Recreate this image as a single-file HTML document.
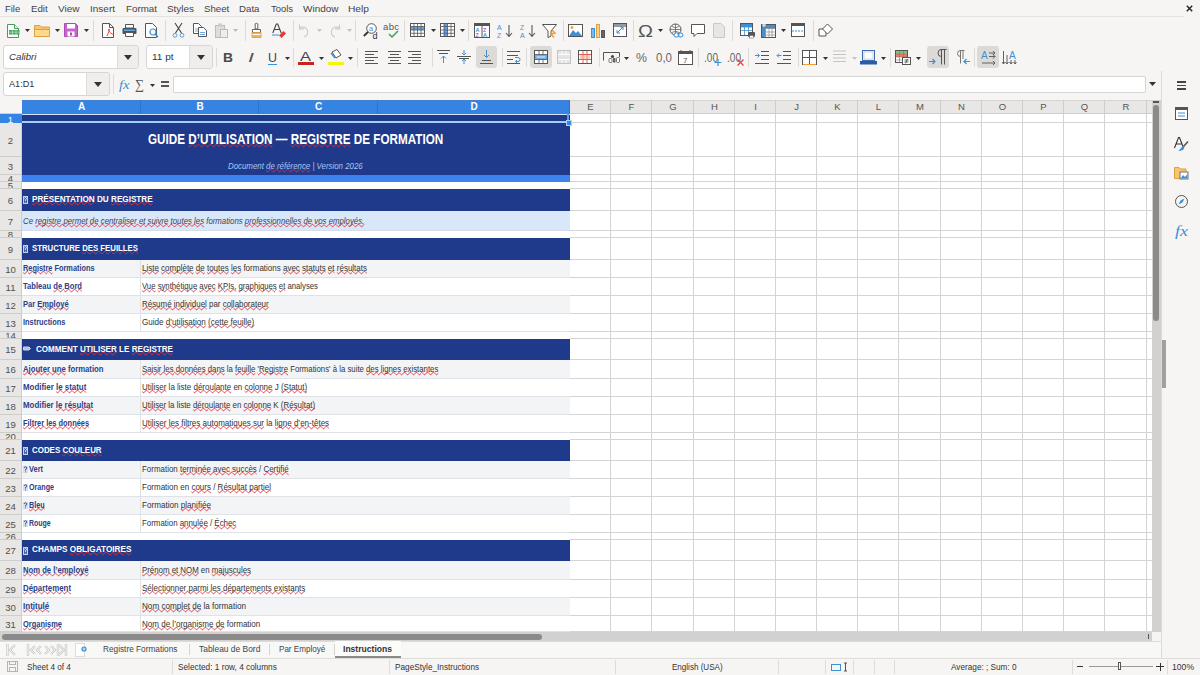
<!DOCTYPE html><html><head><meta charset="utf-8"><style>
*{box-sizing:border-box}
html,body{margin:0;padding:0}
body{width:1200px;height:675px;overflow:hidden;background:#f6f5f4;position:relative;font-family:"Liberation Sans",sans-serif;color:#3a3a3a}
.a{position:absolute}
.t{position:absolute;white-space:nowrap;line-height:1;transform-origin:0 0}
.w{text-decoration:underline wavy #d9303a;text-decoration-thickness:0.5px;text-underline-offset:-0.5px;text-decoration-skip-ink:none}
svg{position:absolute;overflow:visible}
#q0{transform:scaleX(0.9622)}
#q1{transform:scaleX(0.9887)}
#q2{transform:scaleX(1.0255)}
#q3{transform:scaleX(1.0198)}
#q4{transform:scaleX(0.9990)}
#q5{transform:scaleX(1.0117)}
#q6{transform:scaleX(0.9860)}
#q7{transform:scaleX(0.9902)}
#q8{transform:scaleX(0.9617)}
#q9{transform:scaleX(1.0184)}
#q10{transform:scaleX(1.0419)}
#q11{transform:scaleX(1.1794)}
#q12{transform:scaleX(1.0109)}
#q13{transform:scaleX(1.0465)}
#q14{transform:scaleX(1.0649)}
#q15{transform:scaleX(1.6552)}
#q16{transform:scaleX(1.0378)}
#q17{transform:scaleX(1.2685)}
#q18{transform:scaleX(0.9514)}
#q19{transform:scaleX(0.8850)}
#q20{transform:scaleX(0.7744)}
#q21{transform:scaleX(0.7744)}
#q22{transform:scaleX(0.9486)}
#q23{transform:scaleX(1.1181)}
#q24{transform:scaleX(0.9014)}
#q25{transform:scaleX(1.2006)}
#q26{transform:scaleX(0.8608)}
#q27{transform:scaleX(0.8780)}
#q28{transform:scaleX(0.8412)}
#q29{transform:scaleX(0.8924)}
#q30{transform:scaleX(0.9022)}
#q31{transform:scaleX(0.9190)}
#q32{transform:scaleX(0.9135)}
#q33{transform:scaleX(0.8951)}
#q34{transform:scaleX(0.9127)}
#q35{transform:scaleX(0.9596)}
#q36{transform:scaleX(0.8353)}
#q37{transform:scaleX(0.8280)}
#q38{transform:scaleX(0.9062)}
#q39{transform:scaleX(0.8652)}
#q40{transform:scaleX(0.8981)}
#q41{transform:scaleX(0.8808)}
#q42{transform:scaleX(0.9104)}
#q43{transform:scaleX(0.8222)}
#q44{transform:scaleX(0.7750)}
#q45{transform:scaleX(0.8417)}
#q46{transform:scaleX(0.8002)}
#q47{transform:scaleX(0.8139)}
#q48{transform:scaleX(0.7920)}
#q49{transform:scaleX(0.8353)}
#q50{transform:scaleX(0.7779)}
#q51{transform:scaleX(0.8506)}
#q52{transform:scaleX(0.8112)}
#q53{transform:scaleX(0.8191)}
#q54{transform:scaleX(0.8326)}
#q55{transform:scaleX(0.8403)}
#q56{transform:scaleX(0.8297)}
#q57{transform:scaleX(0.8318)}
#q58{transform:scaleX(0.7824)}
#q59{transform:scaleX(0.8436)}
#q60{transform:scaleX(0.7791)}
#q61{transform:scaleX(0.8363)}
#q62{transform:scaleX(0.7515)}
#q63{transform:scaleX(0.8423)}
#q64{transform:scaleX(0.7624)}
#q65{transform:scaleX(0.8540)}
#q66{transform:scaleX(0.7340)}
#q67{transform:scaleX(0.8305)}
#q68{transform:scaleX(0.8068)}
#q69{transform:scaleX(0.8256)}
#q70{transform:scaleX(0.8265)}
#q71{transform:scaleX(0.8380)}
#q72{transform:scaleX(0.8446)}
#q73{transform:scaleX(0.8563)}
#q74{transform:scaleX(0.7856)}
#q75{transform:scaleX(0.8454)}
</style></head><body>

<div class="t" id="q0" style="left:5.30px;top:4.20px;font-size:9.80px;font-weight:normal;color:#444;">File</div>
<div class="t" id="q1" style="left:31.10px;top:4.20px;font-size:9.80px;font-weight:normal;color:#444;">Edit</div>
<div class="t" id="q2" style="left:58.20px;top:4.20px;font-size:9.80px;font-weight:normal;color:#444;">View</div>
<div class="t" id="q3" style="left:90.20px;top:4.20px;font-size:9.80px;font-weight:normal;color:#444;">Insert</div>
<div class="t" id="q4" style="left:125.50px;top:4.20px;font-size:9.80px;font-weight:normal;color:#444;">Format</div>
<div class="t" id="q5" style="left:166.50px;top:4.20px;font-size:9.80px;font-weight:normal;color:#444;">Styles</div>
<div class="t" id="q6" style="left:204.00px;top:4.20px;font-size:9.80px;font-weight:normal;color:#444;">Sheet</div>
<div class="t" id="q7" style="left:239.00px;top:4.20px;font-size:9.80px;font-weight:normal;color:#444;">Data</div>
<div class="t" id="q8" style="left:270.50px;top:4.20px;font-size:9.80px;font-weight:normal;color:#444;">Tools</div>
<div class="t" id="q9" style="left:302.50px;top:4.20px;font-size:9.80px;font-weight:normal;color:#444;">Window</div>
<div class="t" id="q10" style="left:347.50px;top:4.20px;font-size:9.80px;font-weight:normal;color:#444;">Help</div>
<div class="a" style="left:0;top:16px;width:1184px;height:1px;background:#e4e2df"></div>
<svg style="left:1186px;top:4.5px" width="7" height="7" viewBox="0 0 7 7"><path d="M.8 .8L6.2 6.2M6.2 .8L.8 6.2" stroke="#2a2a2a" stroke-width="1.5"/></svg>
<svg style="left:7px;top:24px" width="12" height="14" viewBox="0 0 12 14"><path d="M.5 .5H7.5L11.5 4.5V13.5H.5Z" fill="#fff" stroke="#4f9a62" stroke-width="1"/><path d="M7.5 .5V4.5H11.5" fill="#d8f0dc" stroke="#4f9a62"/><rect x="2" y="6" width="10.5" height="4.5" fill="#47a862"/><path d="M2 8.2H12.5M5.5 6V10.5M9 6V10.5" stroke="#c8ecd0" stroke-width=".6"/></svg>
<svg style="left:25px;top:29px" width="5" height="3" viewBox="0 0 5 3"><path d="M0 0H5L2.5 3Z" fill="#333"/></svg>
<svg style="left:34px;top:24px" width="16" height="13" viewBox="0 0 16 13"><path d="M.5 1.5H6L7.5 3H15.5V12.5H.5Z" fill="#f5c56f" stroke="#e0a040"/><path d="M.5 5.5H15.5V12.5H.5Z" fill="#fbd88b" stroke="#e0a040"/></svg>
<svg style="left:55px;top:29px" width="5" height="3" viewBox="0 0 5 3"><path d="M0 0H5L2.5 3Z" fill="#333"/></svg>
<svg style="left:64px;top:23px" width="14" height="14" viewBox="0 0 14 14"><path d="M.5 .5H11.5L13.5 2.5V13.5H.5Z" fill="#c765cf" stroke="#a94db3"/><rect x="3" y="1" width="8" height="4.5" fill="#fff"/><rect x="3.5" y="8.5" width="7" height="5" fill="#fff"/><rect x="6" y="9.5" width="2" height="3" fill="#a94db3"/></svg>
<svg style="left:84px;top:29px" width="5" height="3" viewBox="0 0 5 3"><path d="M0 0H5L2.5 3Z" fill="#333"/></svg>
<div class="a" style="left:93px;top:20px;width:1px;height:21px;background:#dddbd8"></div>
<svg style="left:102px;top:23px" width="13" height="15" viewBox="0 0 13 15"><path d="M.5 .5H7.5L11.5 4.5V14.5H.5Z" fill="#fff" stroke="#555"/><path d="M7.5 .5V4.5H11.5" fill="none" stroke="#555"/><path d="M5 13C7 9 8 6 7 6S6 9 12 12" stroke="#e0453a" stroke-width="1" fill="none"/></svg>
<svg style="left:122px;top:24px" width="15" height="13" viewBox="0 0 15 13"><path d="M3.5 .5H11.5V4H3.5Z" fill="#fff" stroke="#555"/><rect x=".5" y="4" width="14" height="6" rx="1" fill="#4d5358"/><rect x="2" y="5.5" width="11" height="1.5" fill="#5ba5e0"/><path d="M3.5 8.5H11.5V12.5H3.5Z" fill="#fff" stroke="#555"/></svg>
<svg style="left:145px;top:23px" width="14" height="15" viewBox="0 0 14 15"><path d="M.5 .5H7.5L11.5 4.5V14.5H.5Z" fill="#fff" stroke="#555"/><circle cx="8" cy="9" r="3" fill="none" stroke="#3d8fd6" stroke-width="1.2"/><path d="M10 11L13 14" stroke="#3d8fd6" stroke-width="1.4"/></svg>
<div class="a" style="left:165px;top:20px;width:1px;height:21px;background:#dddbd8"></div>
<svg style="left:172px;top:23px" width="13" height="15" viewBox="0 0 13 15"><path d="M3 0L9.5 10M10 0L3.5 10" stroke="#444" stroke-width="1.1"/><circle cx="3" cy="12.3" r="1.9" fill="none" stroke="#5aa0e0" stroke-width="1"/><circle cx="10" cy="12.3" r="1.9" fill="none" stroke="#5aa0e0" stroke-width="1"/></svg>
<svg style="left:193px;top:23px" width="14" height="14" viewBox="0 0 14 14"><path d="M.5 .5H5.5L8.5 3.5V10.5H.5Z" fill="#fff" stroke="#555"/><path d="M2 6H6M2 8H6" stroke="#5aa0e0" stroke-width=".8"/><path d="M5.5 4.5H10.5L13.5 7.5V13.5H5.5Z" fill="#fff" stroke="#555"/><path d="M7 9.5H12M7 11.5H12" stroke="#5aa0e0" stroke-width=".9"/></svg>
<svg style="left:215px;top:23px" width="13" height="15" viewBox="0 0 13 15"><rect x=".5" y="2.5" width="9" height="12" fill="#ddd" stroke="#bbb"/><rect x="3" y=".5" width="4" height="3" fill="#ccc"/><rect x="5.5" y="6.5" width="7" height="8" fill="#eee" stroke="#bbb"/></svg>
<svg style="left:233px;top:29px" width="5" height="3" viewBox="0 0 5 3"><path d="M0 0H5L2.5 3Z" fill="#bbb"/></svg>
<div class="a" style="left:245px;top:20px;width:1px;height:21px;background:#dddbd8"></div>
<svg style="left:251px;top:23px" width="11" height="15" viewBox="0 0 11 15"><path d="M4.2 .8Q5.5 -.2 6.8 .8V6H4.2Z" fill="#fff" stroke="#555" stroke-width=".9"/><path d="M1.5 6.5H9.5V9.5H1.5Z" fill="#fff" stroke="#555" stroke-width=".9"/><path d="M1 9.5H10V14.5H1Z" fill="#f2b25a" stroke="#d99a4a" stroke-width=".8"/><path d="M1.5 11.5H9.5" stroke="#fff" stroke-width="1"/></svg>
<svg style="left:272px;top:23px" width="14" height="15" viewBox="0 0 14 15"><path d="M.8 10L4.3 1H5.7L9.2 10M2.3 6.5H7.7" stroke="#444" stroke-width="1.1" fill="none"/><path d="M0 12H7" stroke="#3d8fd6" stroke-width="1"/><path d="M7 12.5L11.5 8L14 10.5L9.5 15Z" fill="#e03a3a"/></svg>
<div class="a" style="left:293px;top:20px;width:1px;height:21px;background:#dddbd8"></div>
<svg style="left:298px;top:24px" width="13" height="14" viewBox="0 0 13 14"><path d="M2 4A5 5 0 1 1 6 13" stroke="#c8c8c8" stroke-width="1.1" fill="none"/><path d="M1.5 .5V5H6" stroke="#c8c8c8" stroke-width="1.1" fill="none"/></svg>
<svg style="left:317px;top:29px" width="5" height="3" viewBox="0 0 5 3"><path d="M0 0H5L2.5 3Z" fill="#c4c4c4"/></svg>
<svg style="left:328px;top:24px" width="13" height="14" viewBox="0 0 13 14"><path d="M11 4A5 5 0 1 0 7 13" stroke="#c8c8c8" stroke-width="1.1" fill="none"/><path d="M11.5 .5V5H7" stroke="#c8c8c8" stroke-width="1.1" fill="none"/></svg>
<svg style="left:347px;top:29px" width="5" height="3" viewBox="0 0 5 3"><path d="M0 0H5L2.5 3Z" fill="#c4c4c4"/></svg>
<div class="a" style="left:355px;top:20px;width:1px;height:21px;background:#dddbd8"></div>
<svg style="left:363px;top:23px" width="15" height="15" viewBox="0 0 15 15"><circle cx="8.5" cy="5.5" r="4.8" fill="#fff" stroke="#555" stroke-width="1"/><path d="M5 9L.8 13" stroke="#333" stroke-width="1.8"/><text x="6" y="8" font-size="7.5" fill="#3d8fd6" font-family="Liberation Sans">a</text><text x="9.5" y="15.5" font-size="9" fill="#333" font-family="Liberation Sans">d</text></svg>
<svg style="left:383px;top:22px" width="17" height="16" viewBox="0 0 17 16"><text x="0" y="8" font-size="9.5" fill="#555" font-family="Liberation Sans" textLength="16">abc</text><path d="M6 12L9 15L15 9" stroke="#3aa35a" stroke-width="1.5" fill="none"/></svg>
<div class="a" style="left:404px;top:20px;width:1px;height:21px;background:#dddbd8"></div>
<svg style="left:410px;top:23px" width="15" height="14" viewBox="0 0 15 14"><rect x=".5" y=".5" width="14" height="13" fill="#fff" stroke="#555"/><rect x="1" y="3.5" width="13" height="3.5" fill="#5ea4e6"/><path d="M1 3.5H14M1 7H14M1 10.3H14M4 1V13M7.5 1V13M11 1V13" stroke="#555" stroke-width=".8"/></svg>
<svg style="left:431px;top:29px" width="5" height="3" viewBox="0 0 5 3"><path d="M0 0H5L2.5 3Z" fill="#333"/></svg>
<svg style="left:440px;top:23px" width="15" height="14" viewBox="0 0 15 14"><rect x=".5" y=".5" width="14" height="13" fill="#fff" stroke="#555"/><rect x="4" y="1" width="3.5" height="12" fill="#5ea4e6"/><path d="M1 3.5H14M1 7H14M1 10.3H14M4 1V13M7.5 1V13M11 1V13" stroke="#555" stroke-width=".8"/></svg>
<svg style="left:460px;top:29px" width="5" height="3" viewBox="0 0 5 3"><path d="M0 0H5L2.5 3Z" fill="#333"/></svg>
<div class="a" style="left:468px;top:20px;width:1px;height:21px;background:#dddbd8"></div>
<svg style="left:474px;top:23px" width="16" height="15" viewBox="0 0 16 15"><rect x=".5" y=".5" width="15" height="14" fill="#fff" stroke="#555"/><rect x="1" y="1" width="14" height="2" fill="#555"/><path d="M8 3V14" stroke="#555"/><text x="1.5" y="8.5" font-size="5.5" fill="#3d8fd6" font-family="Liberation Sans" font-weight="bold">A</text><text x="1.5" y="13.5" font-size="5.5" fill="#c05ad0" font-family="Liberation Sans" font-weight="bold">Z</text><text x="9" y="8.5" font-size="5.5" fill="#c05ad0" font-family="Liberation Sans" font-weight="bold">Z</text><text x="9" y="13.5" font-size="5.5" fill="#3d8fd6" font-family="Liberation Sans" font-weight="bold">A</text></svg>
<svg style="left:497px;top:23px" width="16" height="15" viewBox="0 0 16 15"><text x="0" y="6.5" font-size="7" fill="#3d8fd6" font-family="Liberation Sans">A</text><text x="0" y="14.5" font-size="7" fill="#c05ad0" font-family="Liberation Sans">Z</text><path d="M12 2V13M9 10L12 13.5L15 10" stroke="#555" stroke-width="1.1" fill="none"/></svg>
<svg style="left:520px;top:23px" width="16" height="15" viewBox="0 0 16 15"><text x="0" y="6.5" font-size="7" fill="#c05ad0" font-family="Liberation Sans">Z</text><text x="0" y="14.5" font-size="7" fill="#3d8fd6" font-family="Liberation Sans">A</text><path d="M12 2V13M9 10L12 13.5L15 10" stroke="#555" stroke-width="1.1" fill="none"/></svg>
<svg style="left:542px;top:23px" width="15" height="15" viewBox="0 0 15 15"><path d="M.5 1.5H14.5L9 8V13L6 14.5V8Z" fill="#fff" stroke="#555"/><path d="M10 7L13 10L9 11L12 14.5" stroke="#f0a030" stroke-width="1.6" fill="none"/></svg>
<div class="a" style="left:563px;top:20px;width:1px;height:21px;background:#dddbd8"></div>
<svg style="left:568px;top:24px" width="15" height="13" viewBox="0 0 15 13"><rect x=".5" y=".5" width="14" height="12" fill="#fff" stroke="#555"/><path d="M1 12L5 6L8 9L10 7L14 12Z" fill="#3d8fd6"/><circle cx="4" cy="3.5" r="1.4" fill="#f0a030"/></svg>
<svg style="left:591px;top:24px" width="14" height="14" viewBox="0 0 14 14"><rect x=".5" y="4.5" width="3" height="9" fill="#7db8ec" stroke="#3d8fd6"/><rect x="5.5" y=".5" width="3" height="13" fill="#f7d38a" stroke="#e0a040"/><rect x="10.5" y="6.5" width="3" height="7" fill="#666" stroke="#555"/></svg>
<svg style="left:613px;top:23px" width="14" height="14" viewBox="0 0 14 14"><rect x=".5" y=".5" width="13" height="13" fill="#fff" stroke="#555"/><rect x="1" y="1" width="12" height="3" fill="#999"/><path d="M4 10L10 4M7 4H10V7M4 7V10H7" stroke="#3d8fd6" fill="none"/></svg>
<div class="a" style="left:633px;top:20px;width:1px;height:21px;background:#dddbd8"></div>
<div class="t" id="q11" style="left:638.00px;top:22.61px;font-size:17.00px;font-weight:normal;color:#555;">&#937;</div>
<svg style="left:658px;top:29px" width="5" height="3" viewBox="0 0 5 3"><path d="M0 0H5L2.5 3Z" fill="#333"/></svg>
<svg style="left:669px;top:23px" width="15" height="15" viewBox="0 0 15 15"><circle cx="6.5" cy="6.5" r="5.5" fill="none" stroke="#555"/><path d="M1 6.5H12M6.5 1V12M3 3.5Q6.5 6 10 3.5M3 9.5Q6.5 7 10 9.5" stroke="#555" stroke-width=".7" fill="none"/><rect x="5" y="10" width="5" height="4" rx="2" fill="#fff" stroke="#3d8fd6"/><rect x="9" y="10" width="5" height="4" rx="2" fill="none" stroke="#3d8fd6"/></svg>
<svg style="left:691px;top:24px" width="14" height="13" viewBox="0 0 14 13"><path d="M.5 .5H13.5V9.5H6L3 12.5V9.5H.5Z" fill="#fff" stroke="#555"/></svg>
<svg style="left:713px;top:23px" width="12" height="15" viewBox="0 0 12 15"><path d="M.5 .5H8L11.5 4V14.5H.5Z" fill="#e6e6e6" stroke="#c8c8c8"/></svg>
<div class="a" style="left:732px;top:20px;width:1px;height:21px;background:#dddbd8"></div>
<svg style="left:740px;top:23px" width="16" height="16" viewBox="0 0 16 16"><rect x=".5" y=".5" width="12" height="12" fill="#fff" stroke="#555"/><path d="M1 4H12M1 7.5H12M4.5 1V12M8.5 1V12" stroke="#3d8fd6" stroke-width=".8"/><rect x="1" y="1" width="11" height="3" fill="#3d8fd6"/><rect x="8" y="9" width="7" height="5" rx="1" fill="#555"/><rect x="9.5" y="12.5" width="4" height="2.5" fill="#fff" stroke="#555" stroke-width=".5"/></svg>
<svg style="left:761px;top:23px" width="15" height="15" viewBox="0 0 15 15"><rect x=".5" y="1.5" width="14" height="13" fill="#fff" stroke="#555"/><rect x="1" y="2" width="13" height="3.5" fill="#3d8fd6"/><rect x="1" y="2" width="3.5" height="12" fill="#3d8fd6"/><path d="M1 5.5H14M1 9H14M1 12H14M4.5 2V14M8 2V14M11 2V14" stroke="#888" stroke-width=".7"/><path d="M3 0V4M1 2H5" stroke="#fff" stroke-width="1"/></svg>
<svg style="left:781px;top:29px" width="5" height="3" viewBox="0 0 5 3"><path d="M0 0H5L2.5 3Z" fill="#333"/></svg>
<svg style="left:791px;top:23px" width="14" height="14" viewBox="0 0 14 14"><rect x=".5" y=".5" width="13" height="13" fill="#fff" stroke="#555"/><rect x="1" y="1" width="12" height="2" fill="#555"/><path d="M1 8H13" stroke="#3d8fd6" stroke-dasharray="2 1"/></svg>
<div class="a" style="left:813px;top:20px;width:1px;height:21px;background:#dddbd8"></div>
<svg style="left:818px;top:23px" width="15" height="14" viewBox="0 0 15 14"><path d="M1 6H8V13H1Z" fill="#fff" stroke="#555"/><path d="M9.5 1L14.5 6L9.5 11L4.5 6Z" fill="#fff" stroke="#555"/></svg>
<div class="a" style="left:3px;top:45px;width:136px;height:24px;border:1px solid #d8d6d3;border-radius:3px;background:#fff"></div>
<div class="a" style="left:117px;top:46px;width:21px;height:22px;background:#efeeec;border-left:1px solid #dedcd9;border-radius:0 2px 2px 0"></div>
<svg style="left:124px;top:55px" width="8" height="5" viewBox="0 0 8 5"><path d="M0 0H8L4 5Z" fill="#333"/></svg>
<div class="t" id="q12" style="left:9.30px;top:51.57px;font-size:9.60px;font-weight:normal;font-style:italic;color:#333;">Calibri</div>
<div class="a" style="left:146px;top:45px;width:67px;height:24px;border:1px solid #d8d6d3;border-radius:3px;background:#fff"></div>
<div class="a" style="left:189px;top:46px;width:23px;height:22px;background:#efeeec;border-left:1px solid #dedcd9;border-radius:0 2px 2px 0"></div>
<svg style="left:197px;top:55px" width="8" height="5" viewBox="0 0 8 5"><path d="M0 0H8L4 5Z" fill="#333"/></svg>
<div class="t" id="q13" style="left:151.70px;top:51.57px;font-size:9.60px;font-weight:normal;color:#333;">11 pt</div>
<div class="a" style="left:216px;top:48px;width:1px;height:19px;background:#dddbd8"></div>
<div class="t" id="q14" style="left:223.00px;top:50.99px;font-size:13.00px;font-weight:bold;color:#4a4a4a;">B</div>
<div class="t" id="q15" style="left:248.00px;top:50.99px;font-size:13.00px;font-weight:normal;font-style:italic;color:#555;">I</div>
<div class="t" id="q16" style="left:268.00px;top:51.84px;font-size:12.00px;font-weight:normal;color:#444;">U</div>
<div class="a" style="left:268px;top:64px;width:9px;height:1px;background:#3d8fd6"></div>
<svg style="left:285px;top:57px" width="5" height="3" viewBox="0 0 5 3"><path d="M0 0H5L2.5 3Z" fill="#333"/></svg>
<div class="a" style="left:293px;top:48px;width:1px;height:19px;background:#dddbd8"></div>
<div class="t" id="q17" style="left:300.00px;top:49.99px;font-size:13.00px;font-weight:normal;color:#444;">A</div>
<div class="a" style="left:298px;top:62px;width:16px;height:3px;background:#c9211e"></div>
<svg style="left:319px;top:57px" width="5" height="3" viewBox="0 0 5 3"><path d="M0 0H5L2.5 3Z" fill="#333"/></svg>
<svg style="left:329px;top:49px" width="15" height="15" viewBox="0 0 15 15"><path d="M3 3L8 .5L12 6L7 9Z" fill="#fff" stroke="#555"/><path d="M2 4L6 9" stroke="#3d8fd6" stroke-width="1.5"/></svg>
<div class="a" style="left:328px;top:62px;width:16px;height:3px;background:#f5f50a"></div>
<svg style="left:348px;top:57px" width="5" height="3" viewBox="0 0 5 3"><path d="M0 0H5L2.5 3Z" fill="#333"/></svg>
<div class="a" style="left:357px;top:48px;width:1px;height:19px;background:#dddbd8"></div>
<svg style="left:365px;top:50px" width="14" height="14" viewBox="0 0 14 14"><path d="M0 1.5H13" stroke="#555" stroke-width="1"/><path d="M0 4.5H9" stroke="#555" stroke-width="1"/><path d="M0 7.5H13" stroke="#555" stroke-width="1"/><path d="M0 10.5H9" stroke="#555" stroke-width="1"/><path d="M0 13.5H13" stroke="#555" stroke-width="1"/></svg>
<svg style="left:388px;top:50px" width="14" height="14" viewBox="0 0 14 14"><path d="M0 1.5H13" stroke="#555" stroke-width="1"/><path d="M2 4.5H11" stroke="#555" stroke-width="1"/><path d="M0 7.5H13" stroke="#555" stroke-width="1"/><path d="M2 10.5H11" stroke="#555" stroke-width="1"/><path d="M0 13.5H13" stroke="#555" stroke-width="1"/></svg>
<svg style="left:408px;top:50px" width="14" height="14" viewBox="0 0 14 14"><path d="M0 1.5H13" stroke="#555" stroke-width="1"/><path d="M4 4.5H13" stroke="#555" stroke-width="1"/><path d="M0 7.5H13" stroke="#555" stroke-width="1"/><path d="M4 10.5H13" stroke="#555" stroke-width="1"/><path d="M0 13.5H13" stroke="#555" stroke-width="1"/></svg>
<div class="a" style="left:432px;top:48px;width:1px;height:19px;background:#dddbd8"></div>
<svg style="left:437px;top:50px" width="13" height="14" viewBox="0 0 13 14"><path d="M0 .5H13M2 3.5H11" stroke="#555"/><path d="M6.5 13V6M4 8.5L6.5 6L9 8.5" stroke="#3d8fd6" fill="none"/></svg>
<svg style="left:457px;top:50px" width="14" height="14" viewBox="0 0 14 14"><path d="M0 6.5H14M2 8.5H12" stroke="#555"/><path d="M7 0V5M5 3L7 5L9 3M7 14V9M5 11L7 9L9 11" stroke="#3d8fd6" fill="none"/></svg>
<div class="a" style="left:476px;top:46px;width:21px;height:22px;background:#dcdad7;border-radius:3px"></div>
<svg style="left:480px;top:50px" width="13" height="14" viewBox="0 0 13 14"><path d="M0 13.5H13M2 10.5H11" stroke="#555"/><path d="M6.5 0V7M4 5L6.5 7.5L9 5" stroke="#3d8fd6" fill="none"/></svg>
<div class="a" style="left:502px;top:48px;width:1px;height:19px;background:#dddbd8"></div>
<svg style="left:507px;top:50px" width="14" height="14" viewBox="0 0 14 14"><path d="M0 1.5H13M0 5.5H11M0 9.5H6M0 13.5H13" stroke="#555"/><path d="M8 7.5H11A2 2 0 0 1 11 11.5H9M10 10L8.5 11.5L10 13" stroke="#3d8fd6" fill="none"/></svg>
<div class="a" style="left:526px;top:48px;width:1px;height:19px;background:#dddbd8"></div>
<div class="a" style="left:530px;top:46px;width:22px;height:22px;background:#dcdad7;border-radius:3px"></div>
<svg style="left:534px;top:50px" width="14" height="14" viewBox="0 0 14 14"><rect x=".5" y=".5" width="13" height="13" fill="#fff" stroke="#555"/><rect x="1" y="4.5" width="12" height="5" fill="#6aaae6"/><path d="M1 4.5H13M1 9.5H13M5 1V4.5M9 1V4.5M5 9.5V13M9 9.5V13" stroke="#555" stroke-width=".8"/><path d="M2.5 7H11.5" stroke="#fff" stroke-width=".9"/></svg>
<svg style="left:557px;top:50px" width="14" height="14" viewBox="0 0 14 14"><rect x=".5" y=".5" width="13" height="13" fill="#e4e4e4" stroke="#c4c4c4"/><path d="M1 4.5H13M1 9.5H13M5 1V4.5M9 1V4.5M5 9.5V13M9 9.5V13" stroke="#fff" stroke-width=".9"/></svg>
<svg style="left:578px;top:50px" width="14" height="14" viewBox="0 0 14 14"><rect x=".5" y=".5" width="13" height="13" fill="#fff" stroke="#555"/><path d="M1 4.5H13M1 9.5H13M5 1V13M9 1V13" stroke="#e05040" stroke-width=".9"/><path d="M3 5V9M7 5V9M11 5V9" stroke="#e05040" stroke-width=".6"/></svg>
<div class="a" style="left:599px;top:48px;width:1px;height:19px;background:#dddbd8"></div>
<svg style="left:603px;top:51px" width="17" height="12" viewBox="0 0 17 12"><path d="M.5 9.5V1.5H16.5V6" fill="none" stroke="#555"/><circle cx="9.5" cy="5.5" r="1.6" fill="#444"/><rect x="6" y="7.5" width="3" height="4" rx="1" fill="#fff" stroke="#555" stroke-width=".8"/><rect x="10" y="7" width="2.5" height="4.5" fill="#666"/><rect x="13.5" y="6.5" width="3" height="5" rx="1" fill="#fff" stroke="#555" stroke-width=".8"/></svg>
<svg style="left:624px;top:57px" width="5" height="3" viewBox="0 0 5 3"><path d="M0 0H5L2.5 3Z" fill="#333"/></svg>
<div class="t" id="q18" style="left:636.00px;top:50.99px;font-size:13.00px;font-weight:normal;color:#666;">%</div>
<div class="t" id="q19" style="left:656.00px;top:50.99px;font-size:13.00px;font-weight:normal;color:#666;">0,0</div>
<svg style="left:678px;top:50px" width="15" height="15" viewBox="0 0 15 15"><rect x=".5" y="1.5" width="14" height="13" fill="#fff" stroke="#555"/><rect x="1" y="2" width="13" height="2" fill="#555"/><path d="M3 0V3M12 0V3" stroke="#555"/><text x="5" y="13" font-size="8" fill="#555" font-family="Liberation Sans">7</text></svg>
<div class="a" style="left:698px;top:48px;width:1px;height:19px;background:#dddbd8"></div>
<div class="t" id="q20" style="left:704.00px;top:50.99px;font-size:13.00px;font-weight:normal;color:#666;">.00</div>
<svg style="left:714px;top:59px" width="8" height="7" viewBox="0 0 8 7"><path d="M4 0V7M.5 3.5H7.5" stroke="#3d8fd6" stroke-width="1.2"/></svg>
<div class="t" id="q21" style="left:727.00px;top:50.99px;font-size:13.00px;font-weight:normal;color:#666;">.00</div>
<svg style="left:737px;top:59px" width="7" height="7" viewBox="0 0 7 7"><path d="M.5 .5L6.5 6.5M6.5 .5L.5 6.5" stroke="#e04040" stroke-width="1.2"/></svg>
<div class="a" style="left:748px;top:48px;width:1px;height:19px;background:#dddbd8"></div>
<svg style="left:755px;top:50px" width="14" height="14" viewBox="0 0 14 14"><path d="M6 1.5H14M6 5.5H14M6 9.5H14M0 13.5H14" stroke="#555"/><path d="M0 5.5H4M2.5 3.5L4.5 5.5L2.5 7.5" stroke="#3d8fd6" fill="none"/></svg>
<svg style="left:777px;top:50px" width="14" height="14" viewBox="0 0 14 14"><path d="M6 1.5H14M6 5.5H14M6 9.5H14M0 13.5H14" stroke="#555"/><path d="M.5 5.5H4.5M2 3.5L0 5.5L2 7.5" stroke="#3d8fd6" fill="none"/></svg>
<div class="a" style="left:798px;top:48px;width:1px;height:19px;background:#dddbd8"></div>
<svg style="left:802px;top:50px" width="15" height="15" viewBox="0 0 15 15"><rect x=".5" y=".5" width="14" height="14" fill="#fff" stroke="#555"/><path d="M7.5 1V14M1 7.5H14" stroke="#555"/><path d="M1 14.5H14" stroke="#f0a030"/></svg>
<svg style="left:823px;top:57px" width="5" height="3" viewBox="0 0 5 3"><path d="M0 0H5L2.5 3Z" fill="#333"/></svg>
<svg style="left:833px;top:50px" width="13" height="14" viewBox="0 0 13 14"><path d="M0 1H13M0 4.5H13M0 8H13M0 11.5H13" stroke="#c4c4c4" stroke-width="1.2"/></svg>
<svg style="left:852px;top:57px" width="5" height="3" viewBox="0 0 5 3"><path d="M0 0H5L2.5 3Z" fill="#c4c4c4"/></svg>
<svg style="left:860px;top:50px" width="17" height="15" viewBox="0 0 17 15"><rect x="2.5" y=".5" width="12" height="10" fill="#f4f8fc" stroke="#3a6cb0"/><rect x="4" y="2" width="9" height="7" fill="#fff" stroke="#9ab" stroke-width=".5"/><rect x="0" y="11" width="17" height="3.5" fill="#2a5aa8"/></svg>
<svg style="left:881px;top:57px" width="5" height="3" viewBox="0 0 5 3"><path d="M0 0H5L2.5 3Z" fill="#333"/></svg>
<div class="a" style="left:890px;top:48px;width:1px;height:19px;background:#dddbd8"></div>
<svg style="left:895px;top:50px" width="16" height="15" viewBox="0 0 16 15"><rect x=".5" y=".5" width="12" height="12" fill="#fff" stroke="#555"/><rect x="1" y="1" width="11" height="3" fill="#7cc67c"/><rect x="1" y="4" width="11" height="3" fill="#f07a6a"/><path d="M1 4H12M1 7H12M1 10H12M4.5 1V12M8.5 1V12" stroke="#777" stroke-width=".6"/><rect x="7.5" y="7.5" width="8" height="7" fill="#fff" stroke="#555"/><path d="M9.5 10H13.5M9.5 12H13.5M12.5 8.8L10.5 13.3" stroke="#444" stroke-width=".8"/></svg>
<svg style="left:916px;top:57px" width="5" height="3" viewBox="0 0 5 3"><path d="M0 0H5L2.5 3Z" fill="#333"/></svg>
<div class="a" style="left:927px;top:46px;width:22px;height:22px;background:#dcdad7;border-radius:3px"></div>
<svg style="left:935px;top:49px" width="12" height="16" viewBox="0 0 12 16"><path d="M5.5 .5H11.5M6.5 .5V15.5M9.5 .5V15.5M6.5 .5A3.5 3.5 0 0 0 6.5 7.5" stroke="#555" fill="none" stroke-width="1"/></svg>
<svg style="left:929px;top:58px" width="8" height="7" viewBox="0 0 8 7"><path d="M0 3.5H6M3.5 1L6 3.5L3.5 6" stroke="#3d8fd6" fill="none" stroke-width="1.2"/></svg>
<svg style="left:955px;top:50px" width="10" height="14" viewBox="0 0 10 14"><path d="M5 .5H9.5M5.5 .5V13.5M8 .5V9M5.5 .5A3 3 0 0 0 5.5 6.5" stroke="#777" fill="none" stroke-width="1"/></svg>
<svg style="left:963px;top:58px" width="8" height="7" viewBox="0 0 8 7"><path d="M7 3.5H1M3.5 1L1 3.5L3.5 6" stroke="#3d8fd6" fill="none" stroke-width="1.2"/></svg>
<div class="a" style="left:974px;top:48px;width:1px;height:19px;background:#dddbd8"></div>
<div class="a" style="left:977px;top:46px;width:22px;height:22px;background:#dcdad7;border-radius:3px"></div>
<svg style="left:981px;top:50px" width="15" height="15" viewBox="0 0 15 15"><text x="0" y="9" font-size="10" fill="#3d8fd6" font-family="Liberation Sans">A</text><path d="M8 3H14M12 1L14 3L12 5M8 6.5H14M12 4.5L14 6.5L12 8.5M1 13H14M12 11L14 13L12 15" stroke="#555" fill="none" stroke-width=".9"/></svg>
<svg style="left:1002px;top:50px" width="16" height="15" viewBox="0 0 16 15"><text x="7" y="9" font-size="10" fill="#3d8fd6" font-family="Liberation Sans">A</text><path d="M1.5 1V14M0 12L1.5 14L3 12M5 5V14M3.5 12L5 14L6.5 12M9 10V14M7.5 12L9 14L10.5 12M13 10V14M11.5 12L13 14L14.5 12" stroke="#555" fill="none" stroke-width=".9"/></svg>
<div class="a" style="left:3px;top:72px;width:107px;height:24px;border:1px solid #d8d6d3;border-radius:3px;background:#fff"></div>
<div class="a" style="left:86px;top:73px;width:23px;height:22px;background:#efeeec;border-left:1px solid #dedcd9;border-radius:0 2px 2px 0"></div>
<svg style="left:94px;top:82px" width="8" height="5" viewBox="0 0 8 5"><path d="M0 0H8L4 5Z" fill="#333"/></svg>
<div class="t" id="q22" style="left:8.70px;top:79.37px;font-size:9.60px;font-weight:normal;color:#333;">A1:D1</div>
<div class="a" style="left:113px;top:74px;width:1px;height:20px;background:#dddbd8"></div>
<div class="t" id="q23" style="left:119.00px;top:78.49px;font-size:13.00px;font-weight:normal;font-style:italic;font-family:'Liberation Serif',serif;color:#3d8fd6;">fx</div>
<div class="t" id="q24" style="left:135.00px;top:77.65px;font-size:14.00px;font-weight:normal;font-family:'Liberation Serif',serif;color:#555;">&#8721;</div>
<svg style="left:150px;top:84px" width="5" height="3" viewBox="0 0 5 3"><path d="M0 0H5L2.5 3Z" fill="#333"/></svg>
<div class="a" style="left:161px;top:81px;width:8px;height:2px;background:#555"></div>
<div class="a" style="left:161px;top:85px;width:8px;height:2px;background:#555"></div>
<div class="a" style="left:173px;top:76px;width:973px;height:17px;border:1px solid #d8d6d3;border-radius:2px;background:#fff"></div>
<svg style="left:1149px;top:82px" width="7" height="4" viewBox="0 0 7 4"><path d="M0 0H7L3.5 4Z" fill="#333"/></svg>
<div class="a" style="left:1161px;top:71px;width:1px;height:587px;background:#dcdad7"></div>
<div class="a" style="left:1177px;top:81px;width:9px;height:1.5px;background:#444"></div>
<div class="a" style="left:1177px;top:84.5px;width:9px;height:1.5px;background:#444"></div>
<div class="a" style="left:1177px;top:88px;width:9px;height:1.5px;background:#444"></div>
<div class="a" style="left:22px;top:114px;width:1130px;height:518px;background:#fff"></div>
<div class="a" style="left:569px;top:114px;width:1px;height:518px;background:#d4d4d4"></div>
<div class="a" style="left:610px;top:114px;width:1px;height:518px;background:#d4d4d4"></div>
<div class="a" style="left:651px;top:114px;width:1px;height:518px;background:#d4d4d4"></div>
<div class="a" style="left:693px;top:114px;width:1px;height:518px;background:#d4d4d4"></div>
<div class="a" style="left:734px;top:114px;width:1px;height:518px;background:#d4d4d4"></div>
<div class="a" style="left:775px;top:114px;width:1px;height:518px;background:#d4d4d4"></div>
<div class="a" style="left:816px;top:114px;width:1px;height:518px;background:#d4d4d4"></div>
<div class="a" style="left:857px;top:114px;width:1px;height:518px;background:#d4d4d4"></div>
<div class="a" style="left:898px;top:114px;width:1px;height:518px;background:#d4d4d4"></div>
<div class="a" style="left:940px;top:114px;width:1px;height:518px;background:#d4d4d4"></div>
<div class="a" style="left:981px;top:114px;width:1px;height:518px;background:#d4d4d4"></div>
<div class="a" style="left:1022px;top:114px;width:1px;height:518px;background:#d4d4d4"></div>
<div class="a" style="left:1063px;top:114px;width:1px;height:518px;background:#d4d4d4"></div>
<div class="a" style="left:1104px;top:114px;width:1px;height:518px;background:#d4d4d4"></div>
<div class="a" style="left:1146px;top:114px;width:1px;height:518px;background:#d4d4d4"></div>
<div class="a" style="left:22px;top:122px;width:1130px;height:1px;background:#d4d4d4"></div>
<div class="a" style="left:22px;top:156px;width:1130px;height:1px;background:#d4d4d4"></div>
<div class="a" style="left:22px;top:174px;width:1130px;height:1px;background:#d4d4d4"></div>
<div class="a" style="left:22px;top:181px;width:1130px;height:1px;background:#d4d4d4"></div>
<div class="a" style="left:22px;top:188px;width:1130px;height:1px;background:#d4d4d4"></div>
<div class="a" style="left:22px;top:210px;width:1130px;height:1px;background:#d4d4d4"></div>
<div class="a" style="left:22px;top:230px;width:1130px;height:1px;background:#d4d4d4"></div>
<div class="a" style="left:22px;top:237px;width:1130px;height:1px;background:#d4d4d4"></div>
<div class="a" style="left:22px;top:259px;width:1130px;height:1px;background:#d4d4d4"></div>
<div class="a" style="left:22px;top:277px;width:1130px;height:1px;background:#d4d4d4"></div>
<div class="a" style="left:22px;top:295px;width:1130px;height:1px;background:#d4d4d4"></div>
<div class="a" style="left:22px;top:313px;width:1130px;height:1px;background:#d4d4d4"></div>
<div class="a" style="left:22px;top:331px;width:1130px;height:1px;background:#d4d4d4"></div>
<div class="a" style="left:22px;top:338px;width:1130px;height:1px;background:#d4d4d4"></div>
<div class="a" style="left:22px;top:359px;width:1130px;height:1px;background:#d4d4d4"></div>
<div class="a" style="left:22px;top:378px;width:1130px;height:1px;background:#d4d4d4"></div>
<div class="a" style="left:22px;top:396px;width:1130px;height:1px;background:#d4d4d4"></div>
<div class="a" style="left:22px;top:414px;width:1130px;height:1px;background:#d4d4d4"></div>
<div class="a" style="left:22px;top:432px;width:1130px;height:1px;background:#d4d4d4"></div>
<div class="a" style="left:22px;top:439px;width:1130px;height:1px;background:#d4d4d4"></div>
<div class="a" style="left:22px;top:460px;width:1130px;height:1px;background:#d4d4d4"></div>
<div class="a" style="left:22px;top:478px;width:1130px;height:1px;background:#d4d4d4"></div>
<div class="a" style="left:22px;top:496px;width:1130px;height:1px;background:#d4d4d4"></div>
<div class="a" style="left:22px;top:514px;width:1130px;height:1px;background:#d4d4d4"></div>
<div class="a" style="left:22px;top:532px;width:1130px;height:1px;background:#d4d4d4"></div>
<div class="a" style="left:22px;top:539px;width:1130px;height:1px;background:#d4d4d4"></div>
<div class="a" style="left:22px;top:560px;width:1130px;height:1px;background:#d4d4d4"></div>
<div class="a" style="left:22px;top:579px;width:1130px;height:1px;background:#d4d4d4"></div>
<div class="a" style="left:22px;top:597px;width:1130px;height:1px;background:#d4d4d4"></div>
<div class="a" style="left:22px;top:615px;width:1130px;height:1px;background:#d4d4d4"></div>
<div class="a" style="left:22px;top:631px;width:1130px;height:1px;background:#d4d4d4"></div>
<div class="a" style="left:0;top:100px;width:1152px;height:14px;background:#e8e7e5"></div>
<div class="a" style="left:0;top:100px;width:22px;height:14px;background:#f6f5f4"></div>
<div class="a" style="left:22px;top:100px;width:548px;height:14px;background:#3584e4"></div>
<div class="a" style="left:570px;top:100px;width:582px;height:1px;background:#d6d5d3"></div>
<div class="a" style="left:22px;top:100px;width:548px;height:1px;background:#4382d0"></div>
<div class="a" style="left:140px;top:100px;width:1px;height:14px;background:#2f74cc"></div>
<div class="t" style="left:22px;top:101.73px;width:119px;text-align:center;font-size:10px;font-weight:bold;color:#fff">A</div>
<div class="a" style="left:258px;top:100px;width:1px;height:14px;background:#2f74cc"></div>
<div class="t" style="left:141px;top:101.73px;width:118px;text-align:center;font-size:10px;font-weight:bold;color:#fff">B</div>
<div class="a" style="left:377px;top:100px;width:1px;height:14px;background:#2f74cc"></div>
<div class="t" style="left:259px;top:101.73px;width:119px;text-align:center;font-size:10px;font-weight:bold;color:#fff">C</div>
<div class="a" style="left:569px;top:100px;width:1px;height:14px;background:#2f74cc"></div>
<div class="t" style="left:378px;top:101.73px;width:192px;text-align:center;font-size:10px;font-weight:bold;color:#fff">D</div>
<div class="a" style="left:610px;top:100px;width:1px;height:14px;background:#cfcdca"></div>
<div class="t" style="left:570px;top:102.26px;width:41px;text-align:center;font-size:9.5px;color:#555">E</div>
<div class="a" style="left:651px;top:100px;width:1px;height:14px;background:#cfcdca"></div>
<div class="t" style="left:611px;top:102.26px;width:41px;text-align:center;font-size:9.5px;color:#555">F</div>
<div class="a" style="left:693px;top:100px;width:1px;height:14px;background:#cfcdca"></div>
<div class="t" style="left:652px;top:102.26px;width:42px;text-align:center;font-size:9.5px;color:#555">G</div>
<div class="a" style="left:734px;top:100px;width:1px;height:14px;background:#cfcdca"></div>
<div class="t" style="left:694px;top:102.26px;width:41px;text-align:center;font-size:9.5px;color:#555">H</div>
<div class="a" style="left:775px;top:100px;width:1px;height:14px;background:#cfcdca"></div>
<div class="t" style="left:735px;top:102.26px;width:41px;text-align:center;font-size:9.5px;color:#555">I</div>
<div class="a" style="left:816px;top:100px;width:1px;height:14px;background:#cfcdca"></div>
<div class="t" style="left:776px;top:102.26px;width:41px;text-align:center;font-size:9.5px;color:#555">J</div>
<div class="a" style="left:857px;top:100px;width:1px;height:14px;background:#cfcdca"></div>
<div class="t" style="left:817px;top:102.26px;width:41px;text-align:center;font-size:9.5px;color:#555">K</div>
<div class="a" style="left:898px;top:100px;width:1px;height:14px;background:#cfcdca"></div>
<div class="t" style="left:858px;top:102.26px;width:41px;text-align:center;font-size:9.5px;color:#555">L</div>
<div class="a" style="left:940px;top:100px;width:1px;height:14px;background:#cfcdca"></div>
<div class="t" style="left:899px;top:102.26px;width:42px;text-align:center;font-size:9.5px;color:#555">M</div>
<div class="a" style="left:981px;top:100px;width:1px;height:14px;background:#cfcdca"></div>
<div class="t" style="left:941px;top:102.26px;width:41px;text-align:center;font-size:9.5px;color:#555">N</div>
<div class="a" style="left:1022px;top:100px;width:1px;height:14px;background:#cfcdca"></div>
<div class="t" style="left:982px;top:102.26px;width:41px;text-align:center;font-size:9.5px;color:#555">O</div>
<div class="a" style="left:1063px;top:100px;width:1px;height:14px;background:#cfcdca"></div>
<div class="t" style="left:1023px;top:102.26px;width:41px;text-align:center;font-size:9.5px;color:#555">P</div>
<div class="a" style="left:1104px;top:100px;width:1px;height:14px;background:#cfcdca"></div>
<div class="t" style="left:1064px;top:102.26px;width:41px;text-align:center;font-size:9.5px;color:#555">Q</div>
<div class="a" style="left:1146px;top:100px;width:1px;height:14px;background:#cfcdca"></div>
<div class="t" style="left:1105px;top:102.26px;width:42px;text-align:center;font-size:9.5px;color:#555">R</div>
<div class="a" style="left:0;top:113px;width:22px;height:1px;background:#d0cecb"></div>
<div class="a" style="left:570px;top:113px;width:582px;height:1px;background:#d0cecb"></div>
<div class="a" style="left:0;top:114px;width:22px;height:518px;background:#e8e7e5"></div>
<div class="a" style="left:21px;top:114px;width:1px;height:518px;background:#cfcdca"></div>
<div class="a" style="left:0;top:114px;width:22px;height:9px;background:#3584e4"></div>
<div class="a" style="left:0;top:114px;width:21px;height:9px;overflow:hidden"><div class="t" style="left:0;top:0.67px;width:21px;text-align:center;font-size:9.6px;color:#fff">1</div></div>
<div class="a" style="left:0;top:156px;width:22px;height:1px;background:#cfcdca"></div>
<div class="a" style="left:0;top:123px;width:21px;height:33px;overflow:hidden"><div class="t" style="left:0;top:12.87px;width:21px;text-align:center;font-size:9.6px;color:#505050">2</div></div>
<div class="a" style="left:0;top:174px;width:22px;height:1px;background:#cfcdca"></div>
<div class="a" style="left:0;top:157px;width:21px;height:17px;overflow:hidden"><div class="t" style="left:0;top:4.87px;width:21px;text-align:center;font-size:9.6px;color:#505050">3</div></div>
<div class="a" style="left:0;top:181px;width:22px;height:1px;background:#cfcdca"></div>
<div class="a" style="left:0;top:175px;width:21px;height:6px;overflow:hidden"><div class="t" style="left:0;top:-1.13px;width:21px;text-align:center;font-size:9.6px;color:#505050">4</div></div>
<div class="a" style="left:0;top:188px;width:22px;height:1px;background:#cfcdca"></div>
<div class="a" style="left:0;top:182px;width:21px;height:6px;overflow:hidden"><div class="t" style="left:0;top:-1.13px;width:21px;text-align:center;font-size:9.6px;color:#505050">5</div></div>
<div class="a" style="left:0;top:210px;width:22px;height:1px;background:#cfcdca"></div>
<div class="a" style="left:0;top:189px;width:21px;height:21px;overflow:hidden"><div class="t" style="left:0;top:6.87px;width:21px;text-align:center;font-size:9.6px;color:#505050">6</div></div>
<div class="a" style="left:0;top:230px;width:22px;height:1px;background:#cfcdca"></div>
<div class="a" style="left:0;top:211px;width:21px;height:19px;overflow:hidden"><div class="t" style="left:0;top:5.87px;width:21px;text-align:center;font-size:9.6px;color:#505050">7</div></div>
<div class="a" style="left:0;top:237px;width:22px;height:1px;background:#cfcdca"></div>
<div class="a" style="left:0;top:231px;width:21px;height:6px;overflow:hidden"><div class="t" style="left:0;top:-1.13px;width:21px;text-align:center;font-size:9.6px;color:#505050">8</div></div>
<div class="a" style="left:0;top:259px;width:22px;height:1px;background:#cfcdca"></div>
<div class="a" style="left:0;top:238px;width:21px;height:21px;overflow:hidden"><div class="t" style="left:0;top:6.87px;width:21px;text-align:center;font-size:9.6px;color:#505050">9</div></div>
<div class="a" style="left:0;top:277px;width:22px;height:1px;background:#cfcdca"></div>
<div class="a" style="left:0;top:260px;width:21px;height:17px;overflow:hidden"><div class="t" style="left:0;top:4.87px;width:21px;text-align:center;font-size:9.6px;color:#505050">10</div></div>
<div class="a" style="left:0;top:295px;width:22px;height:1px;background:#cfcdca"></div>
<div class="a" style="left:0;top:278px;width:21px;height:17px;overflow:hidden"><div class="t" style="left:0;top:4.87px;width:21px;text-align:center;font-size:9.6px;color:#505050">11</div></div>
<div class="a" style="left:0;top:313px;width:22px;height:1px;background:#cfcdca"></div>
<div class="a" style="left:0;top:296px;width:21px;height:17px;overflow:hidden"><div class="t" style="left:0;top:4.87px;width:21px;text-align:center;font-size:9.6px;color:#505050">12</div></div>
<div class="a" style="left:0;top:331px;width:22px;height:1px;background:#cfcdca"></div>
<div class="a" style="left:0;top:314px;width:21px;height:17px;overflow:hidden"><div class="t" style="left:0;top:4.87px;width:21px;text-align:center;font-size:9.6px;color:#505050">13</div></div>
<div class="a" style="left:0;top:338px;width:22px;height:1px;background:#cfcdca"></div>
<div class="a" style="left:0;top:332px;width:21px;height:6px;overflow:hidden"><div class="t" style="left:0;top:-1.13px;width:21px;text-align:center;font-size:9.6px;color:#505050">14</div></div>
<div class="a" style="left:0;top:359px;width:22px;height:1px;background:#cfcdca"></div>
<div class="a" style="left:0;top:339px;width:21px;height:20px;overflow:hidden"><div class="t" style="left:0;top:6.37px;width:21px;text-align:center;font-size:9.6px;color:#505050">15</div></div>
<div class="a" style="left:0;top:378px;width:22px;height:1px;background:#cfcdca"></div>
<div class="a" style="left:0;top:360px;width:21px;height:18px;overflow:hidden"><div class="t" style="left:0;top:5.37px;width:21px;text-align:center;font-size:9.6px;color:#505050">16</div></div>
<div class="a" style="left:0;top:396px;width:22px;height:1px;background:#cfcdca"></div>
<div class="a" style="left:0;top:379px;width:21px;height:17px;overflow:hidden"><div class="t" style="left:0;top:4.87px;width:21px;text-align:center;font-size:9.6px;color:#505050">17</div></div>
<div class="a" style="left:0;top:414px;width:22px;height:1px;background:#cfcdca"></div>
<div class="a" style="left:0;top:397px;width:21px;height:17px;overflow:hidden"><div class="t" style="left:0;top:4.87px;width:21px;text-align:center;font-size:9.6px;color:#505050">18</div></div>
<div class="a" style="left:0;top:432px;width:22px;height:1px;background:#cfcdca"></div>
<div class="a" style="left:0;top:415px;width:21px;height:17px;overflow:hidden"><div class="t" style="left:0;top:4.87px;width:21px;text-align:center;font-size:9.6px;color:#505050">19</div></div>
<div class="a" style="left:0;top:439px;width:22px;height:1px;background:#cfcdca"></div>
<div class="a" style="left:0;top:433px;width:21px;height:6px;overflow:hidden"><div class="t" style="left:0;top:-1.13px;width:21px;text-align:center;font-size:9.6px;color:#505050">20</div></div>
<div class="a" style="left:0;top:460px;width:22px;height:1px;background:#cfcdca"></div>
<div class="a" style="left:0;top:440px;width:21px;height:20px;overflow:hidden"><div class="t" style="left:0;top:6.37px;width:21px;text-align:center;font-size:9.6px;color:#505050">21</div></div>
<div class="a" style="left:0;top:478px;width:22px;height:1px;background:#cfcdca"></div>
<div class="a" style="left:0;top:461px;width:21px;height:17px;overflow:hidden"><div class="t" style="left:0;top:4.87px;width:21px;text-align:center;font-size:9.6px;color:#505050">22</div></div>
<div class="a" style="left:0;top:496px;width:22px;height:1px;background:#cfcdca"></div>
<div class="a" style="left:0;top:479px;width:21px;height:17px;overflow:hidden"><div class="t" style="left:0;top:4.87px;width:21px;text-align:center;font-size:9.6px;color:#505050">23</div></div>
<div class="a" style="left:0;top:514px;width:22px;height:1px;background:#cfcdca"></div>
<div class="a" style="left:0;top:497px;width:21px;height:17px;overflow:hidden"><div class="t" style="left:0;top:4.87px;width:21px;text-align:center;font-size:9.6px;color:#505050">24</div></div>
<div class="a" style="left:0;top:532px;width:22px;height:1px;background:#cfcdca"></div>
<div class="a" style="left:0;top:515px;width:21px;height:17px;overflow:hidden"><div class="t" style="left:0;top:4.87px;width:21px;text-align:center;font-size:9.6px;color:#505050">25</div></div>
<div class="a" style="left:0;top:539px;width:22px;height:1px;background:#cfcdca"></div>
<div class="a" style="left:0;top:533px;width:21px;height:6px;overflow:hidden"><div class="t" style="left:0;top:-1.13px;width:21px;text-align:center;font-size:9.6px;color:#505050">26</div></div>
<div class="a" style="left:0;top:560px;width:22px;height:1px;background:#cfcdca"></div>
<div class="a" style="left:0;top:540px;width:21px;height:20px;overflow:hidden"><div class="t" style="left:0;top:6.37px;width:21px;text-align:center;font-size:9.6px;color:#505050">27</div></div>
<div class="a" style="left:0;top:579px;width:22px;height:1px;background:#cfcdca"></div>
<div class="a" style="left:0;top:561px;width:21px;height:18px;overflow:hidden"><div class="t" style="left:0;top:5.37px;width:21px;text-align:center;font-size:9.6px;color:#505050">28</div></div>
<div class="a" style="left:0;top:597px;width:22px;height:1px;background:#cfcdca"></div>
<div class="a" style="left:0;top:580px;width:21px;height:17px;overflow:hidden"><div class="t" style="left:0;top:4.87px;width:21px;text-align:center;font-size:9.6px;color:#505050">29</div></div>
<div class="a" style="left:0;top:615px;width:22px;height:1px;background:#cfcdca"></div>
<div class="a" style="left:0;top:598px;width:21px;height:17px;overflow:hidden"><div class="t" style="left:0;top:4.87px;width:21px;text-align:center;font-size:9.6px;color:#505050">30</div></div>
<div class="a" style="left:0;top:631px;width:22px;height:1px;background:#cfcdca"></div>
<div class="a" style="left:0;top:616px;width:21px;height:15px;overflow:hidden"><div class="t" style="left:0;top:3.87px;width:21px;text-align:center;font-size:9.6px;color:#505050">31</div></div>
<div class="a" style="left:22px;top:114px;width:548px;height:9px;background:#1f3a8b"></div>
<div class="a" style="left:22px;top:123px;width:548px;height:34px;background:#1f3a8b"></div>
<div class="a" style="left:22px;top:157px;width:548px;height:18px;background:#1f3a8b"></div>
<div class="a" style="left:22px;top:175px;width:548px;height:7px;background:#3b82f0"></div>
<div class="a" style="left:22px;top:182px;width:548px;height:7px;background:#fff"></div>
<div class="a" style="left:22px;top:231px;width:548px;height:7px;background:#fff"></div>
<div class="a" style="left:22px;top:332px;width:548px;height:7px;background:#fff"></div>
<div class="a" style="left:22px;top:433px;width:548px;height:7px;background:#fff"></div>
<div class="a" style="left:22px;top:533px;width:548px;height:7px;background:#fff"></div>
<div class="a" style="left:22px;top:189px;width:548px;height:22px;background:#1f3a8b"></div>
<div class="a" style="left:22px;top:238px;width:548px;height:22px;background:#1f3a8b"></div>
<div class="a" style="left:22px;top:339px;width:548px;height:21px;background:#1f3a8b"></div>
<div class="a" style="left:22px;top:440px;width:548px;height:21px;background:#1f3a8b"></div>
<div class="a" style="left:22px;top:540px;width:548px;height:21px;background:#1f3a8b"></div>
<div class="a" style="left:22px;top:211px;width:548px;height:20px;background:#d9e7fb"></div>
<div class="a" style="left:22px;top:230px;width:548px;height:1px;background:#d5dde8"></div>
<div class="a" style="left:22px;top:260px;width:548px;height:18px;background:#f3f4f6"></div>
<div class="a" style="left:22px;top:277px;width:548px;height:1px;background:#dfe2e7"></div>
<div class="a" style="left:140px;top:260px;width:1px;height:18px;background:#dfe2e7"></div>
<div class="a" style="left:22px;top:278px;width:548px;height:18px;background:#fff"></div>
<div class="a" style="left:22px;top:295px;width:548px;height:1px;background:#dfe2e7"></div>
<div class="a" style="left:140px;top:278px;width:1px;height:18px;background:#dfe2e7"></div>
<div class="a" style="left:22px;top:296px;width:548px;height:18px;background:#f3f4f6"></div>
<div class="a" style="left:22px;top:313px;width:548px;height:1px;background:#dfe2e7"></div>
<div class="a" style="left:140px;top:296px;width:1px;height:18px;background:#dfe2e7"></div>
<div class="a" style="left:22px;top:314px;width:548px;height:18px;background:#fff"></div>
<div class="a" style="left:22px;top:331px;width:548px;height:1px;background:#dfe2e7"></div>
<div class="a" style="left:140px;top:314px;width:1px;height:18px;background:#dfe2e7"></div>
<div class="a" style="left:22px;top:360px;width:548px;height:19px;background:#f3f4f6"></div>
<div class="a" style="left:22px;top:378px;width:548px;height:1px;background:#dfe2e7"></div>
<div class="a" style="left:140px;top:360px;width:1px;height:19px;background:#dfe2e7"></div>
<div class="a" style="left:22px;top:379px;width:548px;height:18px;background:#fff"></div>
<div class="a" style="left:22px;top:396px;width:548px;height:1px;background:#dfe2e7"></div>
<div class="a" style="left:140px;top:379px;width:1px;height:18px;background:#dfe2e7"></div>
<div class="a" style="left:22px;top:397px;width:548px;height:18px;background:#f3f4f6"></div>
<div class="a" style="left:22px;top:414px;width:548px;height:1px;background:#dfe2e7"></div>
<div class="a" style="left:140px;top:397px;width:1px;height:18px;background:#dfe2e7"></div>
<div class="a" style="left:22px;top:415px;width:548px;height:18px;background:#fff"></div>
<div class="a" style="left:22px;top:432px;width:548px;height:1px;background:#dfe2e7"></div>
<div class="a" style="left:140px;top:415px;width:1px;height:18px;background:#dfe2e7"></div>
<div class="a" style="left:22px;top:461px;width:548px;height:18px;background:#f3f4f6"></div>
<div class="a" style="left:22px;top:478px;width:548px;height:1px;background:#dfe2e7"></div>
<div class="a" style="left:140px;top:461px;width:1px;height:18px;background:#dfe2e7"></div>
<div class="a" style="left:22px;top:479px;width:548px;height:18px;background:#fff"></div>
<div class="a" style="left:22px;top:496px;width:548px;height:1px;background:#dfe2e7"></div>
<div class="a" style="left:140px;top:479px;width:1px;height:18px;background:#dfe2e7"></div>
<div class="a" style="left:22px;top:497px;width:548px;height:18px;background:#f3f4f6"></div>
<div class="a" style="left:22px;top:514px;width:548px;height:1px;background:#dfe2e7"></div>
<div class="a" style="left:140px;top:497px;width:1px;height:18px;background:#dfe2e7"></div>
<div class="a" style="left:22px;top:515px;width:548px;height:18px;background:#fff"></div>
<div class="a" style="left:22px;top:532px;width:548px;height:1px;background:#dfe2e7"></div>
<div class="a" style="left:140px;top:515px;width:1px;height:18px;background:#dfe2e7"></div>
<div class="a" style="left:22px;top:561px;width:548px;height:19px;background:#f3f4f6"></div>
<div class="a" style="left:22px;top:579px;width:548px;height:1px;background:#dfe2e7"></div>
<div class="a" style="left:140px;top:561px;width:1px;height:19px;background:#dfe2e7"></div>
<div class="a" style="left:22px;top:580px;width:548px;height:18px;background:#fff"></div>
<div class="a" style="left:22px;top:597px;width:548px;height:1px;background:#dfe2e7"></div>
<div class="a" style="left:140px;top:580px;width:1px;height:18px;background:#dfe2e7"></div>
<div class="a" style="left:22px;top:598px;width:548px;height:18px;background:#f3f4f6"></div>
<div class="a" style="left:22px;top:615px;width:548px;height:1px;background:#dfe2e7"></div>
<div class="a" style="left:140px;top:598px;width:1px;height:18px;background:#dfe2e7"></div>
<div class="a" style="left:22px;top:616px;width:548px;height:16px;background:#fff"></div>
<div class="a" style="left:22px;top:631px;width:548px;height:1px;background:#dfe2e7"></div>
<div class="a" style="left:140px;top:616px;width:1px;height:16px;background:#dfe2e7"></div>
<div class="t" id="q36" style="left:147.80px;top:131.95px;font-size:14.00px;font-weight:bold;color:#fff;">GUIDE <span class="w">D’UTILISATION</span> — <span class="w">REGISTRE</span> DE FORMATION</div>
<div class="t" id="q37" style="left:228.00px;top:160.96px;font-size:9.50px;font-weight:normal;font-style:italic;color:#a9c5f2;">Document <span class="w">de référence</span> | Version 2026</div>
<svg style="left:23px;top:196px" width="5" height="8" viewBox="0 0 5 8"><rect x=".5" y=".5" width="4" height="7" fill="#4a62a8" stroke="#c5d2ee" stroke-width="1"/><path d="M1.5 2.5A1 1 0 1 1 2.5 3.5V5M2.5 6V6.5" stroke="#e8eefa" stroke-width=".8" fill="none"/></svg>
<div class="t" id="q38" style="left:32.00px;top:194.68px;font-size:9.00px;font-weight:bold;color:#fff;"><span class="w">PRÉSENTATION</span> DU <span class="w">REGISTRE</span></div>
<svg style="left:23px;top:245px" width="5" height="8" viewBox="0 0 5 8"><rect x=".5" y=".5" width="4" height="7" fill="#4a62a8" stroke="#c5d2ee" stroke-width="1"/><path d="M1.5 2.5A1 1 0 1 1 2.5 3.5V5M2.5 6V6.5" stroke="#e8eefa" stroke-width=".8" fill="none"/></svg>
<div class="t" id="q39" style="left:32.00px;top:243.68px;font-size:9.00px;font-weight:bold;color:#fff;">STRUCTURE <span class="w">DES FEUILLES</span></div>
<svg style="left:23px;top:346px" width="8" height="5" viewBox="0 0 8 5"><path d="M.5 1H6L7.5 2.5L6 4H.5Z" fill="#aebfe8" stroke="#c8d4ee"/></svg>
<div class="t" id="q40" style="left:36.00px;top:344.68px;font-size:9.00px;font-weight:bold;color:#fff;">COMMENT <span class="w">UTILISER</span> LE <span class="w">REGISTRE</span></div>
<svg style="left:23px;top:447px" width="5" height="8" viewBox="0 0 5 8"><rect x=".5" y=".5" width="4" height="7" fill="#4a62a8" stroke="#c5d2ee" stroke-width="1"/><path d="M1.5 2.5A1 1 0 1 1 2.5 3.5V5M2.5 6V6.5" stroke="#e8eefa" stroke-width=".8" fill="none"/></svg>
<div class="t" id="q41" style="left:32.00px;top:445.68px;font-size:9.00px;font-weight:bold;color:#fff;">CODES <span class="w">COULEUR</span></div>
<svg style="left:23px;top:547px" width="5" height="8" viewBox="0 0 5 8"><rect x=".5" y=".5" width="4" height="7" fill="#4a62a8" stroke="#c5d2ee" stroke-width="1"/><path d="M1.5 2.5A1 1 0 1 1 2.5 3.5V5M2.5 6V6.5" stroke="#e8eefa" stroke-width=".8" fill="none"/></svg>
<div class="t" id="q42" style="left:32.00px;top:545.38px;font-size:9.00px;font-weight:bold;color:#fff;">CHAMPS <span class="w">OBLIGATOIRES</span></div>
<div class="t" id="q43" style="left:22.50px;top:215.66px;font-size:9.50px;font-weight:normal;font-style:italic;color:#444;">Ce <span class="w">registre permet de centraliser et suivre toutes les</span> formations <span class="w">professionnelles de vos employés.</span></div>
<div class="t" id="q44" style="left:22.70px;top:262.96px;font-size:9.50px;font-weight:bold;color:#2b4088;"><span class="w">Registre</span> Formations</div>
<div class="t" id="q45" style="left:141.70px;top:262.96px;font-size:9.50px;font-weight:normal;color:#333;"><span class="w">Liste</span> <span class="w">complète</span> <span class="w">de</span> <span class="w">toutes</span> <span class="w">les</span> formations <span class="w">avec</span> <span class="w">statuts</span> <span class="w">et</span> <span class="w">résultats</span></div>
<div class="t" id="q46" style="left:22.70px;top:280.96px;font-size:9.50px;font-weight:bold;color:#2b4088;">Tableau <span class="w">de Bord</span></div>
<div class="t" id="q47" style="left:141.70px;top:280.96px;font-size:9.50px;font-weight:normal;color:#333;"><span class="w">Vue</span> <span class="w">synthétique</span> <span class="w">avec</span> <span class="w">KPIs,</span> <span class="w">graphiques</span> <span class="w">et</span> analyses</div>
<div class="t" id="q48" style="left:22.70px;top:298.96px;font-size:9.50px;font-weight:bold;color:#2b4088;">Par <span class="w">Employé</span></div>
<div class="t" id="q49" style="left:141.70px;top:298.96px;font-size:9.50px;font-weight:normal;color:#333;"><span class="w">Résumé individuel</span> par <span class="w">collaborateur</span></div>
<div class="t" id="q50" style="left:22.70px;top:316.96px;font-size:9.50px;font-weight:bold;color:#2b4088;">Instructions</div>
<div class="t" id="q51" style="left:141.70px;top:316.96px;font-size:9.50px;font-weight:normal;color:#333;">Guide <span class="w">d’utilisation</span> <span class="w">(cette feuille)</span></div>
<div class="t" id="q52" style="left:22.70px;top:363.96px;font-size:9.50px;font-weight:bold;color:#2b4088;"><span class="w">Ajouter une</span> formation</div>
<div class="t" id="q53" style="left:141.70px;top:363.96px;font-size:9.50px;font-weight:normal;color:#333;"><span class="w">Saisir les données dans</span> la <span class="w">feuille</span> <span class="w">'Registre</span> Formations' à la suite <span class="w">des lignes existantes</span></div>
<div class="t" id="q54" style="left:22.70px;top:381.96px;font-size:9.50px;font-weight:bold;color:#2b4088;">Modifier <span class="w">le statut</span></div>
<div class="t" id="q55" style="left:141.70px;top:381.96px;font-size:9.50px;font-weight:normal;color:#333;"><span class="w">Utiliser</span> la liste <span class="w">déroulante</span> en <span class="w">colonne</span> J <span class="w">(Statut)</span></div>
<div class="t" id="q56" style="left:22.70px;top:399.96px;font-size:9.50px;font-weight:bold;color:#2b4088;">Modifier <span class="w">le résultat</span></div>
<div class="t" id="q57" style="left:141.70px;top:399.96px;font-size:9.50px;font-weight:normal;color:#333;"><span class="w">Utiliser</span> la liste <span class="w">déroulante</span> en <span class="w">colonne</span> K <span class="w">(Résultat)</span></div>
<div class="t" id="q58" style="left:22.70px;top:417.96px;font-size:9.50px;font-weight:bold;color:#2b4088;"><span class="w">Filtrer les données</span></div>
<div class="t" id="q59" style="left:141.70px;top:417.96px;font-size:9.50px;font-weight:normal;color:#333;"><span class="w">Utiliser les filtres automatiques sur</span> la <span class="w">ligne d’en-têtes</span></div>
<svg style="left:23px;top:466px" width="5" height="7" viewBox="0 0 5 7"><rect x="0" y="0" width="5" height="7" fill="#d5ddf0"/><path d="M1.2 2A1.3 1.3 0 1 1 2.5 3.3V4.5M2.5 5.5V6.3" stroke="#3a4a88" stroke-width=".9" fill="none"/></svg>
<div class="t" id="q60" style="left:29.30px;top:463.96px;font-size:9.50px;font-weight:bold;color:#2b4088;">Vert</div>
<div class="t" id="q61" style="left:141.70px;top:463.96px;font-size:9.50px;font-weight:normal;color:#333;">Formation <span class="w">terminée avec succès</span> / <span class="w">Certifié</span></div>
<svg style="left:23px;top:484px" width="5" height="7" viewBox="0 0 5 7"><rect x="0" y="0" width="5" height="7" fill="#d5ddf0"/><path d="M1.2 2A1.3 1.3 0 1 1 2.5 3.3V4.5M2.5 5.5V6.3" stroke="#3a4a88" stroke-width=".9" fill="none"/></svg>
<div class="t" id="q62" style="left:29.30px;top:481.96px;font-size:9.50px;font-weight:bold;color:#2b4088;">Orange</div>
<div class="t" id="q63" style="left:141.70px;top:481.96px;font-size:9.50px;font-weight:normal;color:#333;">Formation en <span class="w">cours</span> / <span class="w">Résultat partiel</span></div>
<svg style="left:23px;top:502px" width="5" height="7" viewBox="0 0 5 7"><rect x="0" y="0" width="5" height="7" fill="#d5ddf0"/><path d="M1.2 2A1.3 1.3 0 1 1 2.5 3.3V4.5M2.5 5.5V6.3" stroke="#3a4a88" stroke-width=".9" fill="none"/></svg>
<div class="t" id="q64" style="left:29.30px;top:499.96px;font-size:9.50px;font-weight:bold;color:#2b4088;"><span class="w">Bleu</span></div>
<div class="t" id="q65" style="left:141.70px;top:499.96px;font-size:9.50px;font-weight:normal;color:#333;">Formation <span class="w">planifiée</span></div>
<svg style="left:23px;top:520px" width="5" height="7" viewBox="0 0 5 7"><rect x="0" y="0" width="5" height="7" fill="#d5ddf0"/><path d="M1.2 2A1.3 1.3 0 1 1 2.5 3.3V4.5M2.5 5.5V6.3" stroke="#3a4a88" stroke-width=".9" fill="none"/></svg>
<div class="t" id="q66" style="left:29.30px;top:517.96px;font-size:9.50px;font-weight:bold;color:#2b4088;">Rouge</div>
<div class="t" id="q67" style="left:141.70px;top:517.96px;font-size:9.50px;font-weight:normal;color:#333;">Formation <span class="w">annulée</span> / <span class="w">Échec</span></div>
<div class="t" id="q68" style="left:22.70px;top:564.96px;font-size:9.50px;font-weight:bold;color:#2b4088;"><span class="w">Nom de l’employé</span></div>
<div class="t" id="q69" style="left:141.70px;top:564.96px;font-size:9.50px;font-weight:normal;color:#333;"><span class="w">Prénom et NOM</span> en <span class="w">majuscules</span></div>
<div class="t" id="q70" style="left:22.70px;top:582.96px;font-size:9.50px;font-weight:bold;color:#2b4088;"><span class="w">Département</span></div>
<div class="t" id="q71" style="left:141.70px;top:582.96px;font-size:9.50px;font-weight:normal;color:#333;"><span class="w">Sélectionner parmi les départements existants</span></div>
<div class="t" id="q72" style="left:22.70px;top:600.96px;font-size:9.50px;font-weight:bold;color:#2b4088;"><span class="w">Intitulé</span></div>
<div class="t" id="q73" style="left:141.70px;top:600.96px;font-size:9.50px;font-weight:normal;color:#333;"><span class="w">Nom complet de</span> la formation</div>
<div class="t" id="q74" style="left:22.70px;top:618.96px;font-size:9.50px;font-weight:bold;color:#2b4088;"><span class="w">Organisme</span></div>
<div class="t" id="q75" style="left:141.70px;top:618.96px;font-size:9.50px;font-weight:normal;color:#333;"><span class="w">Nom de l’organisme de</span> formation</div>
<div class="a" style="left:22px;top:121px;width:548px;height:2px;background:#9fd0ff"></div>
<div class="a" style="left:22px;top:114px;width:548px;height:1px;background:#cfe6ff"></div>
<div class="a" style="left:567px;top:114px;width:2px;height:9px;background:#5aa0e8"></div>
<div class="a" style="left:566px;top:120px;width:6px;height:6px;background:#3a86e0;border:1px solid #a8d4ff"></div>
<div class="a" style="left:1152px;top:100px;width:9px;height:532px;background:#d2d1cf"></div>
<div class="a" style="left:1153px;top:101px;width:6px;height:2px;background:#555"></div>
<div class="a" style="left:1153px;top:105px;width:6px;height:216px;background:#8a8a8a;border-radius:3px"></div>
<div class="a" style="left:1162px;top:340px;width:4px;height:48px;background:#a0a0a0"></div>
<div class="a" style="left:0;top:632px;width:1152px;height:9px;background:#d2d1cf"></div>
<div class="a" style="left:1148px;top:634px;width:1px;height:5px;background:#555"></div>
<div class="a" style="left:2px;top:634px;width:540px;height:6px;background:#8a8a8a;border-radius:3px"></div>
<svg style="left:1175px;top:107px" width="13" height="13" viewBox="0 0 13 13"><rect x=".5" y=".5" width="12" height="12" fill="#fff" stroke="#555"/><rect x="1" y="1" width="11" height="2" fill="#555"/><path d="M3 6H10M3 9H10" stroke="#3d8fd6"/></svg>
<svg style="left:1174px;top:137px" width="15" height="15" viewBox="0 0 15 15"><path d="M.5 11L4.5 .5H5.5L9.5 11M2.2 7H7.8" stroke="#333" stroke-width="1.1" fill="none"/><path d="M14 4.5L9.5 9.5" stroke="#555" stroke-width="1.6"/><path d="M9 9L7 11Q5 14 4 14Q7 14 9.5 12.5L10.5 10.5Z" fill="#3d8fd6"/></svg>
<svg style="left:1174px;top:166px" width="15" height="14" viewBox="0 0 15 14"><path d="M.5 1.5H5L6.5 3H12V12.5H.5Z" fill="#f5c56f" stroke="#e0a040"/><rect x="6" y="6" width="8" height="7" fill="#fff" stroke="#555" stroke-width=".8"/><path d="M6.5 12.5L9 9L11 11L13.5 8V12.5Z" fill="#3d8fd6"/></svg>
<svg style="left:1175px;top:195px" width="13" height="13" viewBox="0 0 13 13"><circle cx="6.5" cy="6.5" r="6" fill="none" stroke="#555"/><path d="M9.5 3.5L7.5 7.5L3.5 9.5L5.5 5.5Z" fill="#3d8fd6"/></svg>
<div class="t" id="q25" style="left:1175.00px;top:224.30px;font-size:15.00px;font-weight:normal;font-style:italic;font-family:'Liberation Serif',serif;color:#3d8fd6;">fx</div>
<div class="a" style="left:0;top:641px;width:1161px;height:1px;background:#dcdcdc"></div>
<div class="a" style="left:0;top:642px;width:1161px;height:15px;background:#f8f8f7"></div>
<svg style="left:6px;top:643px" width="62" height="14" viewBox="0 0 62 14"><g fill="none" stroke-linejoin="miter"><g stroke="#cdcdcd" stroke-width="2.4"><path d="M1.5 1V13M9 2L4 7L9 12M22 1V13M29 3L25 7L29 11M35 3L31 7L35 11M39 3L43 7L39 11M45 3L49 7L45 11M52 1V13M53 2L58 7L53 12M60 1V13"/></g><g stroke="#f8f8f7" stroke-width=".8"><path d="M1.5 1.5V12.5M9 2L4 7L9 12M22 1.5V12.5M29 3L25 7L29 11M35 3L31 7L35 11M39 3L43 7L39 11M45 3L49 7L45 11M52 1.5V12.5M53 2L58 7L53 12M60 1.5V12.5"/></g></g></svg>
<div class="a" style="left:75px;top:643px;width:10px;height:14px;background:#fff;border:1px solid #ddd"></div>
<svg style="left:81px;top:646px" width="6" height="6" viewBox="0 0 6 6"><circle cx="3" cy="3" r="2.6" fill="#3d8fd6"/><path d="M3 1.5V4.5M1.5 3H4.5" stroke="#fff" stroke-width=".8"/></svg>
<div class="t" id="q26" style="left:102.95px;top:644.37px;font-size:9.60px;font-weight:normal;color:#444;">Registre Formations</div>
<div class="t" id="q27" style="left:198.95px;top:644.37px;font-size:9.60px;font-weight:normal;color:#444;">Tableau de Bord</div>
<div class="t" id="q28" style="left:279.40px;top:644.37px;font-size:9.60px;font-weight:normal;color:#444;">Par Employé</div>
<div class="a" style="left:189px;top:644px;width:1px;height:11px;background:#d6d4d1"></div>
<div class="a" style="left:269px;top:644px;width:1px;height:11px;background:#d6d4d1"></div>
<div class="a" style="left:334px;top:644px;width:1px;height:11px;background:#d6d4d1"></div>
<div class="a" style="left:335px;top:641px;width:66px;height:17px;background:#fbfbfa"></div>
<div class="a" style="left:335px;top:656px;width:66px;height:2px;background:#8a8a8a"></div>
<div class="t" id="q29" style="left:343.00px;top:644.37px;font-size:9.60px;font-weight:bold;color:#333;">Instructions</div>
<div class="a" style="left:0;top:658px;width:1200px;height:1px;background:#e0dedb"></div>
<svg style="left:7px;top:661px" width="11" height="11" viewBox="0 0 11 11"><rect x=".5" y=".5" width="10" height="10" fill="none" stroke="#b4b4b4"/><rect x="2.5" y=".5" width="6" height="3" fill="none" stroke="#b4b4b4"/><rect x="2.5" y="6.5" width="6" height="4" fill="none" stroke="#b4b4b4"/></svg>
<div class="t" id="q30" style="left:27.20px;top:663.18px;font-size:9.00px;font-weight:normal;color:#333;">Sheet 4 of 4</div>
<div class="t" id="q31" style="left:178.45px;top:663.18px;font-size:9.00px;font-weight:normal;color:#333;">Selected: 1 row, 4 columns</div>
<div class="t" id="q32" style="left:394.70px;top:663.18px;font-size:9.00px;font-weight:normal;color:#333;">PageStyle_Instructions</div>
<div class="t" id="q33" style="left:672.20px;top:663.18px;font-size:9.00px;font-weight:normal;color:#333;">English (USA)</div>
<div class="t" id="q34" style="left:951.20px;top:663.18px;font-size:9.00px;font-weight:normal;color:#333;">Average: ; Sum: 0</div>
<div class="t" id="q35" style="left:1172.20px;top:663.18px;font-size:9.00px;font-weight:normal;color:#333;">100%</div>
<div class="a" style="left:172px;top:660px;width:1px;height:14px;background:#dedcd9"></div>
<div class="a" style="left:389px;top:660px;width:1px;height:14px;background:#dedcd9"></div>
<div class="a" style="left:615px;top:660px;width:1px;height:14px;background:#dedcd9"></div>
<div class="a" style="left:778px;top:660px;width:1px;height:14px;background:#dedcd9"></div>
<div class="a" style="left:825px;top:660px;width:1px;height:14px;background:#dedcd9"></div>
<div class="a" style="left:853px;top:660px;width:1px;height:14px;background:#dedcd9"></div>
<div class="a" style="left:874px;top:660px;width:1px;height:14px;background:#dedcd9"></div>
<div class="a" style="left:894px;top:660px;width:1px;height:14px;background:#dedcd9"></div>
<div class="a" style="left:1072px;top:660px;width:1px;height:14px;background:#dedcd9"></div>
<div class="a" style="left:1167px;top:660px;width:1px;height:14px;background:#dedcd9"></div>
<svg style="left:831px;top:663px" width="17" height="9" viewBox="0 0 17 9"><rect x=".5" y="1.5" width="9" height="6" fill="none" stroke="#3d8fd6"/><path d="M13 0H16M14.5 0V8M13 8H16" stroke="#555"/></svg>
<div class="a" style="left:1077px;top:666px;width:6px;height:1.2px;background:#333"></div>
<div class="a" style="left:1089px;top:666px;width:64px;height:1px;background:#999"></div>
<div class="a" style="left:1118px;top:662px;width:3px;height:8px;border:1px solid #555;background:#fff"></div>
<div class="a" style="left:1156px;top:666px;width:8px;height:1px;background:#333"></div>
<div class="a" style="left:1159.5px;top:662.5px;width:1px;height:8px;background:#333"></div>
</body></html>
